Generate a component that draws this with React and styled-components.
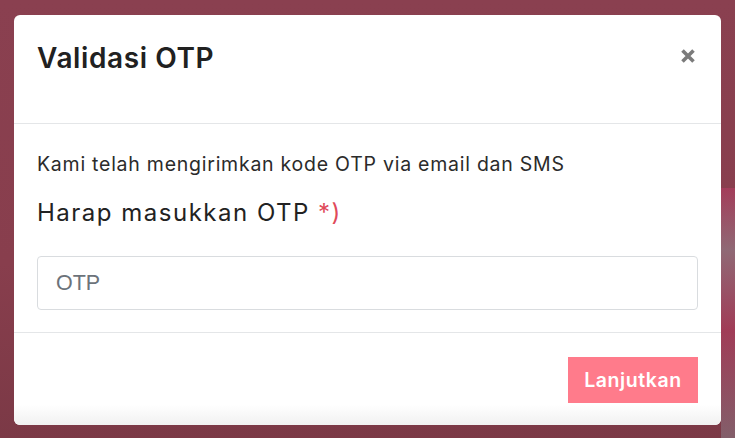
import styled, { createGlobalStyle } from "styled-components";

const GlobalStyle = createGlobalStyle`
  html, body {
    margin: 0;
    padding: 0;
    background: #8a4050;
  }
  * {
    box-sizing: border-box;
  }
`;

const CloseIcon = () => (
  <svg width="16" height="16" viewBox="0 0 16 16" aria-hidden="true">
    <path
      d="M2.5 2.5l11 11M13.5 2.5l-11 11"
      stroke="#7b7b7b"
      strokeWidth="3.6"
      strokeLinecap="butt"
    />
  </svg>
);

const App = () => {
  return (
    <>
      <GlobalStyle />
      <Backdrop>
        <Modal>
          <Header>
            <Title>Validasi OTP</Title>
            <CloseButton type="button" aria-label="Tutup">
              <CloseIcon />
            </CloseButton>
          </Header>
          <Body>
            <Info>Kami telah mengirimkan kode OTP via email dan SMS</Info>
            <Label>
              Harap masukkan OTP <Required>*)</Required>
            </Label>
            <Input placeholder="OTP" />
          </Body>
          <Footer>
            <SubmitButton type="button">Lanjutkan</SubmitButton>
          </Footer>
        </Modal>
      </Backdrop>
    </>
  );
};

const Backdrop = styled.div`
  width: 735px;
  height: 438px;
  padding: 15px 14px 13px;
  background:
    linear-gradient(180deg, transparent 0 188px, rgba(185, 60, 100, 0.55) 188px, rgba(150, 140, 150, 0.55) 250px, rgba(190, 60, 100, 0.5) 330px, rgba(140, 140, 150, 0.45) 438px) right top / 14px 100% no-repeat,
    linear-gradient(180deg, #8a4050 0%, #883e4d 60%, #7b3946 100%);
`;

const Modal = styled.div`
  width: 707px;
  height: 410px;
  display: flex;
  flex-direction: column;
  background: #fff;
  border-radius: 6px;
  overflow: hidden;
`;

const Header = styled.div`
  height: 109px;
  display: flex;
  align-items: flex-start;
  justify-content: space-between;
  padding: 24px 25px 0 23px;
  border-bottom: 1px solid #e4e6e8;
`;

const Title = styled.h5`
  margin: 0;
  font-family: "Inter", "Noto Sans", sans-serif;
  font-size: 28px;
  font-weight: 600;
  line-height: 38px;
  color: #212121;
  letter-spacing: 0.6px;
`;

const CloseButton = styled.button`
  border: 0;
  background: transparent;
  padding: 0;
  margin-top: 9px;
  width: 16px;
  height: 16px;
  display: flex;
  cursor: pointer;
`;

const Body = styled.div`
  flex: 1;
  display: flex;
  flex-direction: column;
  padding: 27px 23px 21px 23px;
  border-bottom: 1px solid #e4e6e8;
`;

const Info = styled.p`
  margin: 0;
  font-family: "Inter", "Noto Sans", sans-serif;
  font-size: 19.5px;
  line-height: 26px;
  letter-spacing: 0.75px;
  color: #2b2b2b;
`;

const Label = styled.label`
  margin-top: 21px;
  font-family: "Inter", "Noto Sans", sans-serif;
  font-size: 24px;
  line-height: 30px;
  letter-spacing: 1.5px;
  color: #222;
`;

const Required = styled.span`
  color: #e04a5a;
`;

const Input = styled.input`
  margin-top: 28px;
  flex: none;
  height: 54px;
  width: 100%;
  padding: 0 18px;
  border: 1px solid #d9dcdf;
  border-radius: 4px;
  font-family: "Liberation Sans", Arial, sans-serif;
  font-size: 21.5px;
  color: #495057;
  outline: none;
  &::placeholder {
    color: #6c737a;
  }
`;

const Footer = styled.div`
  height: 92px;
  display: flex;
  justify-content: flex-end;
  align-items: flex-start;
  padding: 24px 23px 0;
  background: linear-gradient(180deg, #fff 78%, #f1f1f1 100%);
`;

const SubmitButton = styled.button`
  width: 130px;
  height: 46px;
  border: 0;
  border-radius: 0;
  background: #ff7b8b;
  color: #fff;
  font-family: "Inter", "Noto Sans", sans-serif;
  font-size: 19.5px;
  font-weight: 600;
  letter-spacing: 0.6px;
  cursor: pointer;
`;

export default App;
